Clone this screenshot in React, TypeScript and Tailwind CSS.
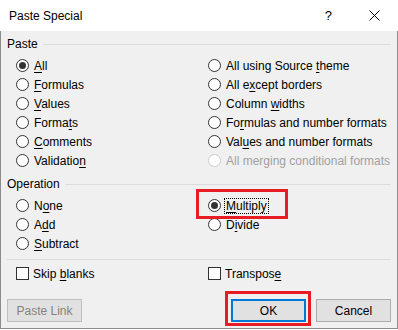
import React from 'react';

interface OptionProps {
  label: string;
  u?: number;
  checked?: boolean;
  disabled?: boolean;
  focused?: boolean;
}

const Mnemonic: React.FC<{ label: string; u?: number }> = ({ label, u }) => {
  if (u === undefined || u < 0) return <>{label}</>;
  return (
    <>
      {label.slice(0, u)}
      <span className="underline underline-offset-[2px]">{label[u]}</span>
      {label.slice(u + 1)}
    </>
  );
};

const Radio: React.FC<OptionProps> = ({ label, u, checked, disabled, focused }) => (
  <div className="flex h-[19px] items-center">
    <span
      className={`flex h-[13px] w-[13px] items-center justify-center rounded-full border bg-white ${
        disabled ? 'border-[#cccccc]' : 'border-[#333333]'
      }`}
    >
      {checked && <span className="h-[7px] w-[7px] rounded-full bg-[#333333]" />}
    </span>
    <span
      className={`ml-[3px] px-[1px] leading-[14px] ${disabled ? 'text-[#a0a0a0]' : 'text-black'} ${
        focused ? 'border border-dotted border-black' : 'border border-transparent'
      }`}
    >
      <Mnemonic label={label} u={u} />
    </span>
  </div>
);

const Checkbox: React.FC<{ label: string; u?: number }> = ({ label, u }) => (
  <div className="flex h-[19px] items-center">
    <span className="h-[13px] w-[13px] border border-[#333333] bg-white" />
    <span className="ml-[4px]">
      <Mnemonic label={label} u={u} />
    </span>
  </div>
);

const GroupLabel: React.FC<{ text: string }> = ({ text }) => (
  <div className="flex h-[16px] items-center pl-[6px] pr-[6px]">
    <span>{text}</span>
    <span className="ml-[5px] h-px flex-1 bg-[#dcdcdc]" />
  </div>
);

export default function App() {
  return (
    <div
      className="flex h-[330px] w-[398px] flex-col text-[12px] text-black"
      style={{ fontFamily: '"Segoe UI", "Liberation Sans", Arial, sans-serif' }}
    >
      {/* title bar */}
      <div className="flex h-[31px] items-center bg-white">
        <span className="ml-[9px] flex-1">Paste Special</span>
        <span className="mr-[37px] text-[13px]">?</span>
        <svg width="11" height="11" viewBox="0 0 11 11" className="mr-[18px]">
          <path d="M0.5 0.5 L10.5 10.5 M10.5 0.5 L0.5 10.5" stroke="#000" strokeWidth="1" />
        </svg>
      </div>

      <div className="flex h-[298px] flex-col border-x border-b border-[#8c8c8c] bg-[#f0f0f0] pt-[5px]">
        <GroupLabel text="Paste" />
        <div className="mt-[4px] grid grid-cols-[192px_1fr] pl-[15px]">
          <Radio label="All" u={0} checked />
          <Radio label="All using Source theme" u={17} />
          <Radio label="Formulas" u={0} />
          <Radio label="All except borders" u={5} />
          <Radio label="Values" u={0} />
          <Radio label="Column widths" u={7} />
          <Radio label="Formats" u={5} />
          <Radio label="Formulas and number formats" u={2} />
          <Radio label="Comments" u={0} />
          <Radio label="Values and number formats" u={3} />
          <Radio label="Validation" u={9} />
          <Radio label="All merging conditional formats" disabled />
        </div>

        <div className="mt-[6px]">
          <GroupLabel text="Operation" />
        </div>
        <div className="mt-[4px] grid grid-cols-[192px_1fr] pl-[15px]">
          <Radio label="None" u={1} />
          <div className="relative">
            <Radio label="Multiply" u={0} checked focused />
            <span className="pointer-events-none absolute -left-[12px] -top-[7px] h-[30px] w-[92px] border-[3px] border-[#e81c24]" />
          </div>
          <Radio label="Add" u={1} />
          <Radio label="Divide" u={1} />
          <Radio label="Subtract" u={0} />
          <div />
        </div>

        <div className="mx-[6px] mt-[6px] h-px bg-[#dcdcdc]" />

        <div className="mt-[4px] grid grid-cols-[192px_1fr] pl-[15px]">
          <Checkbox label="Skip blanks" u={5} />
          <Checkbox label="Transpose" u={8} />
        </div>

        <div className="mt-[16px] flex px-[6px]">
          <button className="h-[23px] w-[75px] border border-[#bfbfbf] bg-[#e1e1e1] text-[#838383]">
            Paste Link
          </button>
          <div className="flex-1" />
          <div className="relative">
            <button className="h-[23px] w-[75px] border-2 border-[#0078d7] bg-[#e1e1e1]">OK</button>
            <span className="pointer-events-none absolute -bottom-[4px] -left-[6px] -right-[5px] -top-[8px] border-[3px] border-[#e81c24]" />
          </div>
          <button className="ml-[10px] h-[23px] w-[75px] border border-[#adadad] bg-[#e1e1e1]">Cancel</button>
        </div>
      </div>
    </div>
  );
}
